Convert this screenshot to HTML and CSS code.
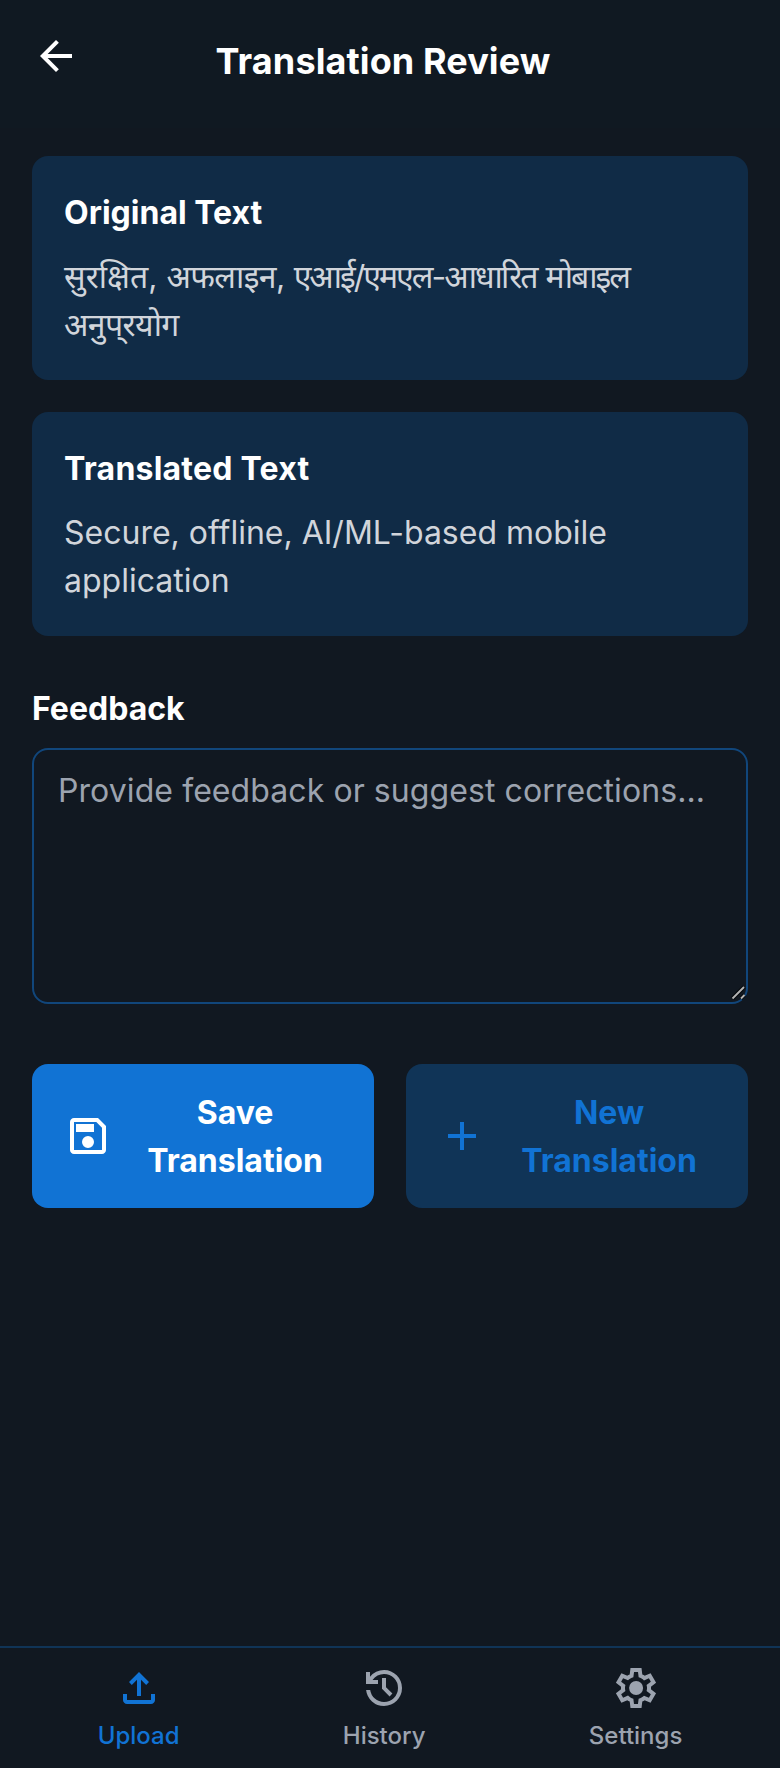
FILE: index.html
```html
<!DOCTYPE html>
<html lang="en">
<head>
<meta charset="utf-8">
<title>Translation Review</title>
<link rel="stylesheet" href="styles.css">
</head>
<body>
<div class="app">
  <header class="header">
    <button class="back" aria-label="Back">
      <svg class="icon" viewBox="0 -960 960 960"><path d="m313-440 224 224-57 56-320-320 320-320 57 56-224 224h487v80H313Z"/></svg>
    </button>
    <h1 class="title">Translation Review</h1>
  </header>
  <main class="main">
    <section class="card">
      <h2 class="heading">Original Text</h2>
      <p class="copy" lang="hi">सुरक्षित, <span class="snug">अफलाइन,</span> <span class="tight">एआई/एमएल-आधारित</span> <span class="tight">मोबाइल</span> <span class="snug">अनुप्‌रयोग</span></p>
    </section>
    <section class="card">
      <h2 class="heading heading-wide">Translated Text</h2>
      <p class="copy">Secure, offline, AI/ML-based mobile application</p>
    </section>
    <section class="feedback">
      <h2 class="heading">Feedback</h2>
      <div class="field">
        <textarea class="input" placeholder="Provide feedback or suggest corrections..."></textarea>
        <svg class="grip" viewBox="0 0 16 16"><path class="grip-shade" d="M1.500 13.500 13 2M10 13.500l3.500-3.500"/><path class="grip-line" d="M1.500 13.500 13 2M10 13.500l3.500-3.500"/></svg>
      </div>
    </section>
    <div class="actions">
      <button class="btn btn-primary">
        <svg class="icon" viewBox="0 -960 960 960"><path d="M840-680v480q0 33-23.500 56.500T760-120H200q-33 0-56.500-23.500T120-200v-560q0-33 23.500-56.500T200-840h480l160 160Zm-80 34L646-760H200v560h560v-446ZM480-240q50 0 85-35t35-85q0-50-35-85t-85-35q-50 0-85 35t-35 85q0 50 35 85t85 35ZM240-560h360v-160H240v160Z"/></svg>
        <span class="label">Save Translation</span>
      </button>
      <button class="btn btn-secondary">
        <svg class="icon" viewBox="0 0 24 24"><path d="M11 5h2v6h6v2h-6v6h-2v-6H5v-2h6Z"/></svg>
        <span class="label">New Translation</span>
      </button>
    </div>
  </main>
  <nav class="nav">
    <a class="tab tab-active">
      <svg class="icon" viewBox="0 -960 960 960"><path d="M440-320v-326L336-542l-56-58 200-200 200 200-56 58-104-104v326h-80ZM240-160q-33 0-56.500-23.500T160-240v-120h80v120h480v-120h80v120q0 33-23.500 56.500T720-160H240Z"/></svg>
      <span>Upload</span>
    </a>
    <a class="tab">
      <svg class="icon" viewBox="0 -960 960 960"><path d="M480-120q-138 0-240.500-91.500T122-440h82q14 104 92.500 172T480-200q117 0 198.500-81.500T760-480q0-117-81.500-198.500T480-760q-69 0-129 32t-101 88h110v80H120v-240h80v94q51-64 124.500-99T480-840q75 0 140.500 28.500t114 77q48.500 48.500 77 114T840-480q0 75-28.500 140.500t-77 114q-48.500 48.500-114 77T480-120Zm112-192L440-464v-216h80v184l128 128-56 56Z"/></svg>
      <span>History</span>
    </a>
    <a class="tab">
      <svg class="icon" viewBox="0 -960 960 960"><path d="m370-80-16-128q-13-5-24.500-12T307-235l-119 50L78-375l103-78q-1-7-1-13.500v-27q0-6.500 1-13.500L78-585l110-190 119 50q11-8 23-15t24-12l16-128h220l16 128q13 5 24.500 12t22.500 15l119-50 110 190-103 78q1 7 1 13.500v27q0 6.500-2 13.500l103 78-110 190-118-50q-11 8-23 15t-24 12L590-80H370Zm70-80h79l14-106q31-8 57.500-23.500T639-327l99 41 39-68-86-65q5-14 7-29.500t2-31.500q0-16-2-31.500t-7-29.500l86-65-39-68-99 42q-22-23-48.500-38.500T533-694l-13-106h-79l-14 106q-31 8-57.500 23.500T321-633l-99-41-39 68 86 64q-5 15-7 30t-2 32q0 16 2 31t7 30l-86 65 39 68 99-42q22 23 48.500 38.500T427-266l13 106Z"/><circle cx="482" cy="-480" r="140"/></svg>
      <span>Settings</span>
    </a>
  </nav>
</div>
</body>
</html>
```
FILE: styles.css
```css
* {
  box-sizing: border-box;
}

body {
  margin: 0;
  background: #111821;
  color: #fff;
  font-family: Inter, "Noto Sans", sans-serif;
  font-size: 32px;
  line-height: 48px;
}

h1, h2, p {
  margin: 0;
}

button {
  border: 0;
  font: inherit;
  color: inherit;
}

.app {
  display: flex;
  flex-direction: column;
  min-height: 1768px;
}

.icon {
  flex: none;
  width: 48px;
  height: 48px;
  fill: currentColor;
}

.header {
  display: flex;
  align-items: flex-start;
  height: 128px;
  padding: 32px 32px 0;
  background: #101922;
}

.back {
  display: flex;
  width: 48px;
  height: 48px;
  padding: 0;
  background: none;
}

.title {
  flex: 1;
  padding: 1px 62px 0 0;
  font-size: 36px;
  font-weight: 700;
  line-height: 56px;
  letter-spacing: 0.1px;
  text-align: center;
}

.main {
  display: flex;
  flex: 1;
  flex-direction: column;
  gap: 32px;
  padding: 28px 32px 32px;
}

.card {
  display: flex;
  flex-direction: column;
  gap: 16px;
  padding: 33px 32px 31px;
  border-radius: 16px;
  background: #102b46;
}

.heading {
  font-size: 32px;
  font-weight: 700;
  line-height: 48px;
}

.heading-wide {
  letter-spacing: 0.22px;
}

.copy {
  color: #d1d5db;
}

.snug {
  letter-spacing: -0.6px;
}

.tight {
  letter-spacing: -2px;
}

.feedback {
  display: flex;
  flex-direction: column;
  gap: 15px;
  padding-top: 17px;
}

.field {
  position: relative;
}

.input {
  display: block;
  width: 100%;
  height: 256px;
  padding: 17px 22px 16px 24px;
  border: 2px solid #11467b;
  border-radius: 16px;
  background: #111821;
  color: #fff;
  font: inherit;
  letter-spacing: 0.08px;
  resize: none;
}

.input::placeholder {
  color: #9ca3af;
}

.grip {
  position: absolute;
  right: 1px;
  bottom: 3px;
  width: 16px;
  height: 16px;
  fill: none;
}

.grip-shade {
  stroke: #05080c;
  stroke-width: 4;
}

.grip-line {
  stroke: #b4b4b4;
  stroke-width: 1.8;
}

.actions {
  display: grid;
  grid-template-columns: 1fr 1fr;
  gap: 32px;
  padding-top: 28px;
}

.btn {
  display: flex;
  align-items: center;
  gap: 16px;
  height: 144px;
  padding: 0 32px;
  border-radius: 16px;
  font-weight: 700;
}

.btn-primary {
  background: #1173d4;
}

.btn-secondary {
  background: #103457;
  color: #1173d4;
}

.label {
  flex: 1;
  padding-top: 2px;
  text-align: center;
}

.nav {
  display: flex;
  justify-content: space-around;
  height: 122px;
  padding: 16px 16px 0;
  border-top: 2px solid #103457;
  background: #111821;
}

.tab {
  display: flex;
  flex-direction: column;
  align-items: center;
  gap: 8px;
  color: #9ca3af;
  font-size: 24px;
  font-weight: 500;
  line-height: 32px;
}

.tab-active {
  color: #1173d4;
}
```
